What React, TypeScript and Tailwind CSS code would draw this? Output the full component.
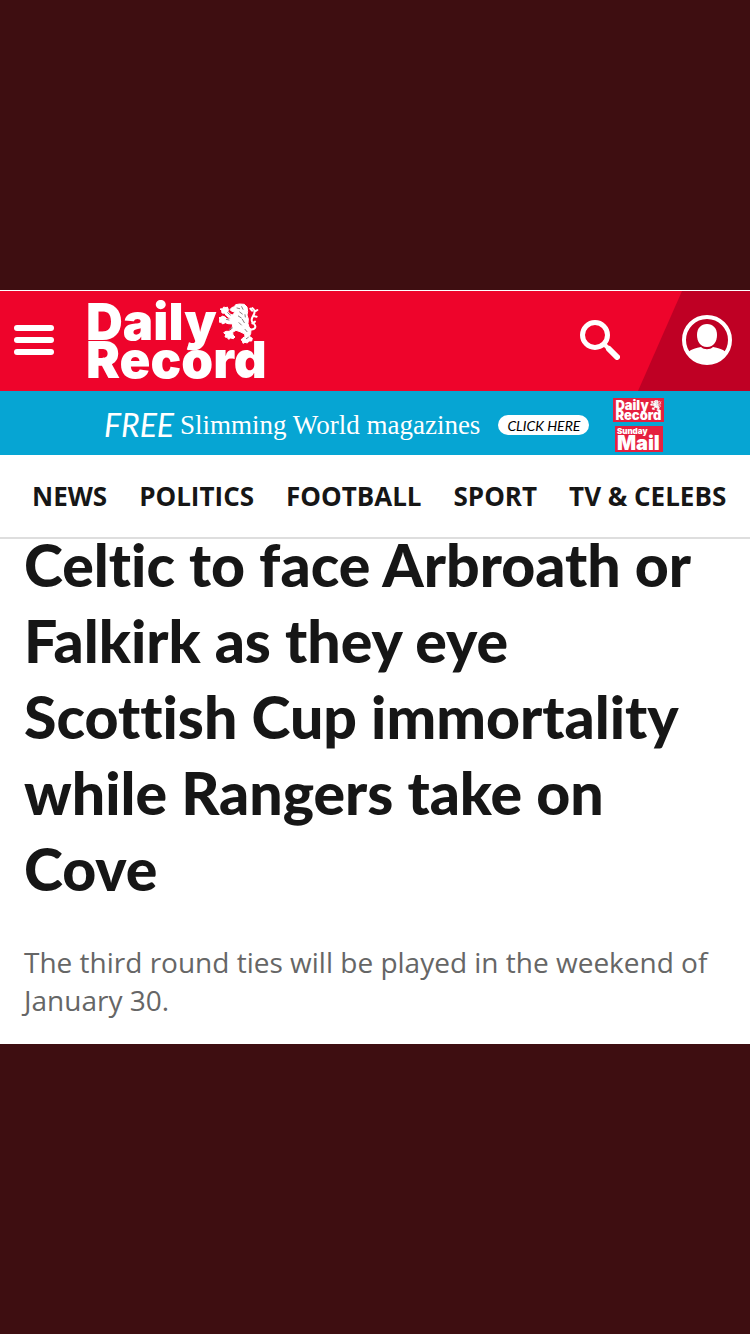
import React from "react";

const sections = [
  { label: "NEWS", href: "#news" },
  { label: "POLITICS", href: "#politics" },
  { label: "FOOTBALL", href: "#football" },
  { label: "SPORT", href: "#sport" },
  { label: "TV & CELEBS", href: "#tv-celebs" },
];

const Lion = ({ className }: { className: string }) => (
  <svg viewBox="20 20 120 130" className={className} fill="none" aria-hidden="true">
    <path
      fill="#fff"
      stroke="#fff"
      strokeWidth="3"
      strokeLinejoin="round"
      d="M66 30l4-6 12-2 14 1 8 8 2 14-2 10 4 12-1 14 3 10 6 8-1 12-4 8 9 6-2 8-8 0-5 6-7-2-6 3-2-8-4-2 6-7 6-2-1-9-14-7-12-4-10 6 1 8 6 6-5 5-8-2-6 4-5-6-6-1 2-7-6-6 7-4 9 0 8-4 2-10 1-8-14-1-8-3-8 4-5-5-6-1 2-7-4-6 8-1 4-4 8 3 6 6 11 0-3-3-9-6-6-8-8-1-1-7-5-5 8-1 3-5 7 2 4-2 3 7-1 7 6 7 7 3 4-4 3-6-9-1-5-5 5-6z"
    />
    <path
      stroke="#fff"
      strokeWidth="6"
      strokeLinecap="round"
      strokeLinejoin="round"
      d="M113 98c10 2 19-4 15-12s-10-8-10-16 6-14 8-20c2-6 0-12-6-16M119 42l-5-6M126 46l9-6M122 58l11 2M120 80l8-5"
    />
    <path
      stroke="#8a7f80"
      strokeWidth="3"
      strokeLinecap="round"
      d="M74 34l8 2M88 30l4 8M82 46l8 6M78 58l9 6M90 68l6 10M80 78l7 7M46 48l8 7M42 68l8 2M60 94l-9 4M98 98l6 7M98 54l1 7M108 122l-6 4"
    />
  </svg>
);

const Masthead = () => (
  <a
    href="#home"
    className="relative flex flex-col font-[Inter,sans-serif] text-[51px] font-black leading-[38px] text-white"
  >
    <span>Daily</span>
    <span>Record</span>
    <Lion className="absolute right-2 top-0 h-11 w-10" />
  </a>
);

const Header = () => (
  <header className="flex h-[101px] items-stretch border-t border-white bg-[#ee042b]">
    <button type="button" aria-label="Menu" className="flex w-[68px] flex-col items-center justify-center gap-1.5 pb-0.5">
      <span className="h-1.5 w-10 rounded-full bg-white" />
      <span className="h-1.5 w-10 rounded-full bg-white" />
      <span className="h-1.5 w-10 rounded-full bg-white" />
    </button>
    <div className="flex flex-1 items-center pl-[18px]">
      <Masthead />
    </div>
    <button type="button" aria-label="Search" className="flex items-center px-[18px] pb-0.5">
      <svg viewBox="0 0 40 40" className="h-10 w-10" fill="none" stroke="#fff">
        <circle cx="15" cy="15" r="12.5" strokeWidth="5" />
        <path d="M24 24l4 4" strokeWidth="4" />
        <path d="M29 29l8 8" strokeWidth="6" strokeLinecap="round" />
      </svg>
    </button>
    <button
      type="button"
      aria-label="Account"
      className="flex w-28 items-center justify-end bg-[#bf0024] pb-0.5 pr-[18px] [clip-path:polygon(44px_0,100%_0,100%_100%,0_100%)]"
    >
      <svg viewBox="0 0 50 50" className="size-[50px]">
        <circle cx="25" cy="25" r="23" fill="none" stroke="#fff" strokeWidth="4" />
        <path d="M25 9c6 0 10 4 10 11 0 6-3 12-10 12s-10-6-10-12c0-7 4-11 10-11z" fill="#fff" />
        <path d="M6 37c4-3 8-4 13-5 3 3 9 3 12 0 5 1 9 2 13 5-4 7-11 11-19 11S10 44 6 37z" fill="#fff" />
      </svg>
    </button>
  </header>
);

const Promo = () => (
  <aside className="flex h-16 items-center bg-[#06a5d3] pl-[104px] pt-1 text-white">
    <span className="font-[Lato,sans-serif] text-[32px] italic leading-8">FREE</span>
    <span className="ml-1.5 font-['Liberation_Serif',serif] text-[27px] leading-8">Slimming World magazines</span>
    <a
      href="#offer"
      className="ml-[18px] flex h-5 w-[91px] items-center justify-center rounded-full bg-white font-[Lato,sans-serif] text-[14px] italic text-black"
    >
      CLICK HERE
    </a>
    <div className="ml-6 flex flex-col items-center gap-1 font-[Inter,sans-serif] font-black">
      <div className="relative flex h-6 w-[51px] flex-col justify-center bg-[#e5203f] pl-0.5 text-[13px] leading-[10px]">
        <span>Daily</span>
        <span>Record</span>
        <Lion className="absolute right-0.5 top-0.5 h-3 w-3" />
      </div>
      <div className="flex h-[26px] w-12 flex-col justify-center bg-[#e5203f] pl-0.5">
        <span className="text-[8px] leading-2">Sunday</span>
        <span className="text-[20px] leading-4">Mail</span>
      </div>
    </div>
  </aside>
);

export default function App() {
  return (
    <div className="flex min-h-screen flex-col justify-center bg-[#3e0e11]">
      <main className="bg-white text-[#161616]">
        <Header />
        <Promo />
        <nav className="flex h-[84px] items-center gap-8 whitespace-nowrap border-b-2 border-[#dedede] px-8 font-['Open_Sans',sans-serif] text-[26px] font-bold">
          {sections.map((s) => (
            <a key={s.label} href={s.href}>
              {s.label}
            </a>
          ))}
        </nav>
        <article className="-mt-3 px-6 pb-[25px]">
          <h1 className="font-[Lato,sans-serif] text-[59px] font-black leading-[76px] [font-variant-ligatures:none]">
            Celtic to face Arbroath or Falkirk as they eye Scottish Cup immortality while Rangers take on Cove
          </h1>
          <p className="mt-9 font-['Open_Sans',sans-serif] text-[28px] leading-[38px] text-[#666]">
            The third round ties will be played in the weekend of January 30.
          </p>
        </article>
      </main>
    </div>
  );
}
